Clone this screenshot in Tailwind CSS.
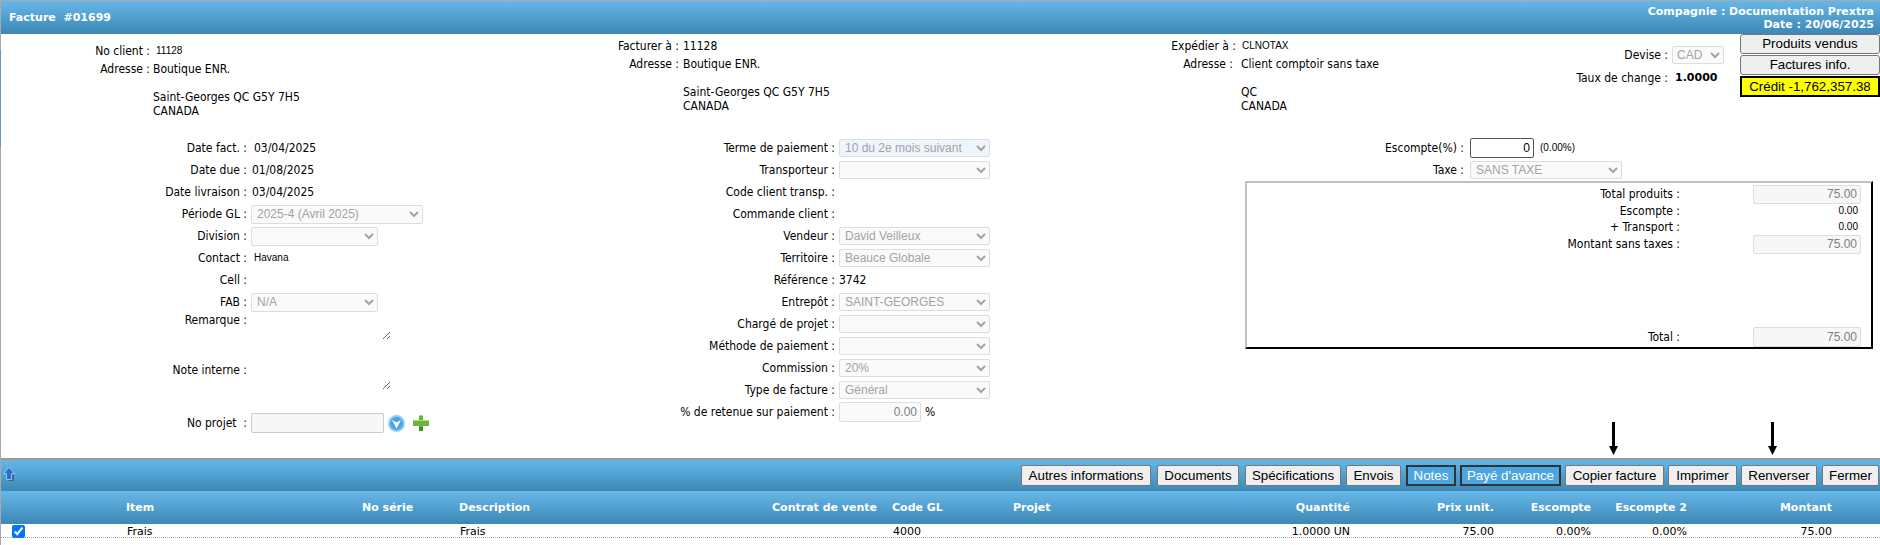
<!DOCTYPE html>
<html lang="fr">
<head>
<meta charset="utf-8">
<title>Facture</title>
<script src="https://cdn.jsdelivr.net/npm/@tailwindcss/browser@4"></script>
</head>
<body class="bg-white">
<div class="relative h-[545px] w-[1880px] overflow-hidden">
<div class="absolute left-0 top-[50px] z-10 h-[97px] w-px bg-[#5b9bbd]"></div>
<div class="relative h-[545px] w-[1880px] overflow-hidden border-l border-[#aaaaaa] text-[12px] leading-[14px] text-black font-['DejaVu_Sans_Condensed','Liberation_Sans',sans-serif]">

  <header class="h-[34px] border-t border-[#aaaaaa] bg-gradient-to-b from-[#66b7e8] to-[#3c88b6] flex items-center justify-between pl-[8px] pr-[6px] text-white font-bold text-[11px] font-['DejaVu_Sans',sans-serif]">
    <div class="whitespace-pre">Facture  #01699</div>
    <div class="text-right leading-[13px]">
      <div>Compagnie : Documentation Prextra</div>
      <div>Date : 20/06/2025</div>
    </div>
  </header>

  <section class="h-[103px] flex">
    <div class="w-[499px] pt-[8px]">
      <div class="flex h-[18px] items-center"><div class="w-[149px] text-right">No client :</div><div class="ml-[6px] text-[10px] font-['Liberation_Sans',sans-serif]">11128</div></div>
      <div class="flex h-[18px] items-center"><div class="w-[149px] text-right">Adresse :</div><div class="ml-[3px]">Boutique ENR.</div></div>
      <div class="ml-[152px] mt-[12px]"><div>Saint-Georges QC G5Y 7H5</div><div>CANADA</div></div>
    </div>
    <div class="w-[550px] pt-[3px]">
      <div class="flex h-[18px] items-center"><div class="w-[179px] text-right">Facturer à :</div><div class="ml-[4px]">11128</div></div>
      <div class="flex h-[18px] items-center"><div class="w-[179px] text-right">Adresse :</div><div class="ml-[4px]">Boutique ENR.</div></div>
      <div class="ml-[183px] mt-[12px]"><div>Saint-Georges QC G5Y 7H5</div><div>CANADA</div></div>
    </div>
    <div class="w-[450px] pt-[3px]">
      <div class="flex h-[18px] items-center"><div class="w-[186px] text-right">Expédier à :</div><div class="ml-[6px] text-[10px] font-['Liberation_Sans',sans-serif]">CLNOTAX</div></div>
      <div class="flex h-[18px] items-center"><div class="w-[183px] text-right">Adresse :</div><div class="ml-[8px]">Client comptoir sans taxe</div></div>
      <div class="ml-[191px] mt-[12px]"><div>QC</div><div>CANADA</div></div>
    </div>
    <div class="w-[240px] pt-[12px]">
      <div class="flex h-[18px] items-center">
        <div class="w-[168px] text-right">Devise :</div>
        <select disabled class="ml-[4px] h-[18px] w-[52px] rounded-[2px] border border-[#dddddd] bg-[#fafafa] text-[12px] text-[#a3a3a3] font-['Liberation_Sans',sans-serif]"><option>CAD</option></select>
      </div>
      <div class="mt-[5px] flex h-[18px] items-center">
        <div class="w-[168px] text-right">Taux de change :</div>
        <div class="ml-[7px] text-[11px] font-bold font-['DejaVu_Sans',sans-serif]">1.0000</div>
      </div>
    </div>
    <div class="w-[140px] flex flex-col gap-[1px] text-center text-[13.33px] font-['Liberation_Sans',sans-serif]">
      <button class="h-[20px] border border-[#777777] rounded-[3px] bg-[#efefef] leading-[18px]">Produits vendus</button>
      <button class="h-[20px] border border-[#777777] rounded-[3px] bg-[#efefef] leading-[18px]">Factures info.</button>
      <button class="h-[21px] border-2 border-black bg-[#ffff00] leading-[17px]">Crédit -1,762,357.38</button>
    </div>
  </section>

  <section class="h-[321px] flex">
    <div class="w-[588px]">
      <div class="flex h-[22px] items-center"><div class="w-[246px] text-right">Date fact. :</div><div class="ml-[7px]">03/04/2025</div></div>
      <div class="flex h-[22px] items-center"><div class="w-[246px] text-right">Date due :</div><div class="ml-[5px]">01/08/2025</div></div>
      <div class="flex h-[22px] items-center"><div class="w-[246px] text-right">Date livraison :</div><div class="ml-[5px]">03/04/2025</div></div>
      <div class="flex h-[22px] items-center"><div class="w-[246px] text-right">Période GL :</div><select disabled class="ml-[4px] h-[19px] w-[172px] rounded-[2px] border border-[#dddddd] bg-[#fafafa] pl-[1px] text-[12px] text-[#a3a3a3] font-['Liberation_Sans',sans-serif]"><option>2025-4 (Avril 2025)</option></select></div>
      <div class="flex h-[22px] items-center"><div class="w-[246px] text-right">Division :</div><select disabled class="ml-[4px] h-[19px] w-[127px] rounded-[2px] border border-[#dddddd] bg-[#fafafa] pl-[1px] text-[12px] text-[#a3a3a3] font-['Liberation_Sans',sans-serif]"><option></option></select></div>
      <div class="flex h-[22px] items-center"><div class="w-[246px] text-right">Contact :</div><div class="ml-[7px] text-[10px] font-['Liberation_Sans',sans-serif]">Havana</div></div>
      <div class="flex h-[22px] items-center"><div class="w-[246px] text-right">Cell :</div></div>
      <div class="flex h-[22px] items-center"><div class="w-[246px] text-right">FAB :</div><select disabled class="ml-[4px] h-[19px] w-[127px] rounded-[2px] border border-[#dddddd] bg-[#fafafa] pl-[1px] text-[12px] text-[#a3a3a3] font-['Liberation_Sans',sans-serif]"><option>N/A</option></select></div>
      <div class="flex h-[27px] items-start"><div class="w-[246px] text-right">Remarque :</div><textarea disabled class="ml-[4px] h-[27px] w-[140px] resize border-0 bg-white"></textarea></div>
      <div class="mt-[23px] flex h-[27px] items-start"><div class="w-[246px] text-right">Note interne :</div><textarea disabled class="ml-[4px] h-[27px] w-[140px] resize border-0 bg-white"></textarea></div>
      <div class="mt-[23px] flex h-[20px] items-center">
        <div class="w-[246px] text-right whitespace-pre">No projet  :</div>
        <input disabled class="ml-[4px] h-[20px] w-[133px] rounded-[2px] border border-[#cccccc] bg-[#f7f7f7]">
        <svg class="ml-[4px]" width="17" height="17" viewBox="0 0 17 17"><circle cx="8.5" cy="8.5" r="8.5" fill="#8fd0f5"/><circle cx="8.5" cy="8.5" r="6.5" fill="#4da3e6"/><path d="M4 5 L8.5 7.5 L13 5 L8.5 13.5 Z" fill="#ffffff"/></svg>
        <svg class="ml-[8px]" width="16" height="16" viewBox="0 0 16 16"><rect x="6" y="0" width="4" height="16" fill="#5fb82a"/><rect x="0" y="6" width="16" height="4" fill="#63bd2c"/><rect x="0" y="5" width="16" height="1" fill="#a9dc8e"/><rect x="6" y="0" width="4" height="1" fill="#a9dc8e"/><rect x="6" y="12" width="4" height="4" fill="#3e9017"/><rect x="0" y="10" width="16" height="1" fill="#8a9a80"/></svg>
      </div>
    </div>

    <div class="w-[656px]">
      <div class="flex h-[22px] items-center"><div class="w-[246px] text-right">Terme de paiement :</div><select disabled class="ml-[4px] h-[18px] w-[151px] rounded-[2px] border border-[#dddddd] bg-[#eef5fd] pl-[1px] text-[12px] text-[#a3a3a3] font-['Liberation_Sans',sans-serif]"><option>10 du 2e mois suivant</option></select></div>
      <div class="flex h-[22px] items-center"><div class="w-[246px] text-right">Transporteur :</div><select disabled class="ml-[4px] h-[18px] w-[151px] rounded-[2px] border border-[#dddddd] bg-[#fafafa] pl-[1px] text-[12px] text-[#a3a3a3] font-['Liberation_Sans',sans-serif]"><option></option></select></div>
      <div class="flex h-[22px] items-center"><div class="w-[246px] text-right">Code client transp. :</div></div>
      <div class="flex h-[22px] items-center"><div class="w-[246px] text-right">Commande client :</div></div>
      <div class="flex h-[22px] items-center"><div class="w-[246px] text-right">Vendeur :</div><select disabled class="ml-[4px] h-[18px] w-[151px] rounded-[2px] border border-[#dddddd] bg-[#fafafa] pl-[1px] text-[12px] text-[#a3a3a3] font-['Liberation_Sans',sans-serif]"><option>David Veilleux</option></select></div>
      <div class="flex h-[22px] items-center"><div class="w-[246px] text-right">Territoire :</div><select disabled class="ml-[4px] h-[18px] w-[151px] rounded-[2px] border border-[#dddddd] bg-[#fafafa] pl-[1px] text-[12px] text-[#a3a3a3] font-['Liberation_Sans',sans-serif]"><option>Beauce Globale</option></select></div>
      <div class="flex h-[22px] items-center"><div class="w-[246px] text-right">Référence :</div><div class="ml-[4px]">3742</div></div>
      <div class="flex h-[22px] items-center"><div class="w-[246px] text-right">Entrepôt :</div><select disabled class="ml-[4px] h-[18px] w-[151px] rounded-[2px] border border-[#dddddd] bg-[#fafafa] pl-[1px] text-[12px] text-[#a3a3a3] font-['Liberation_Sans',sans-serif]"><option>SAINT-GEORGES</option></select></div>
      <div class="flex h-[22px] items-center"><div class="w-[246px] text-right">Chargé de projet :</div><select disabled class="ml-[4px] h-[18px] w-[151px] rounded-[2px] border border-[#dddddd] bg-[#fafafa] pl-[1px] text-[12px] text-[#a3a3a3] font-['Liberation_Sans',sans-serif]"><option></option></select></div>
      <div class="flex h-[22px] items-center"><div class="w-[246px] text-right">Méthode de paiement :</div><select disabled class="ml-[4px] h-[18px] w-[151px] rounded-[2px] border border-[#dddddd] bg-[#fafafa] pl-[1px] text-[12px] text-[#a3a3a3] font-['Liberation_Sans',sans-serif]"><option></option></select></div>
      <div class="flex h-[22px] items-center"><div class="w-[246px] text-right">Commission :</div><select disabled class="ml-[4px] h-[18px] w-[151px] rounded-[2px] border border-[#dddddd] bg-[#fafafa] pl-[1px] text-[12px] text-[#a3a3a3] font-['Liberation_Sans',sans-serif]"><option>20%</option></select></div>
      <div class="flex h-[22px] items-center"><div class="w-[246px] text-right">Type de facture :</div><select disabled class="ml-[4px] h-[18px] w-[151px] rounded-[2px] border border-[#dddddd] bg-[#fafafa] pl-[1px] text-[12px] text-[#a3a3a3] font-['Liberation_Sans',sans-serif]"><option>Général</option></select></div>
      <div class="flex h-[22px] items-center"><div class="w-[246px] text-right">% de retenue sur paiement :</div><input disabled value="0.00" class="ml-[4px] h-[20px] w-[82px] rounded-[2px] border border-[#dddddd] bg-[#fafafa] pr-[3px] text-right text-[#808080] font-['Liberation_Sans',sans-serif]"><div class="ml-[4px]">%</div></div>
    </div>

    <div class="w-[635px]">
      <div class="flex h-[22px] items-center"><div class="w-[219px] text-right">Escompte(%) :</div><input value="0" class="ml-[6px] h-[20px] w-[64px] rounded-[2px] border border-[#555555] pr-[3px] text-right text-[12px] font-['Liberation_Sans',sans-serif]"><div class="ml-[6px] text-[10px] font-['Liberation_Sans',sans-serif]">(0.00%)</div></div>
      <div class="flex h-[22px] items-center"><div class="w-[219px] text-right">Taxe :</div><select disabled class="ml-[6px] h-[18px] w-[152px] rounded-[2px] border border-[#dddddd] bg-[#fafafa] pl-[1px] text-[12px] text-[#a3a3a3] font-['Liberation_Sans',sans-serif]"><option>SANS TAXE</option></select></div>
      <div class="h-[168px] w-[628px] border-2 border-t-[#c0c0c0] border-l-[#c0c0c0] border-r-black border-b-black flex flex-col pt-[1px]">
        <div class="flex h-[20px] items-center"><div class="w-[433px] text-right">Total produits :</div><input disabled value="75.00" class="ml-[73px] h-[19px] w-[108px] rounded-[2px] border border-[#dddddd] bg-[#f7f7f7] pr-[3px] text-right text-[#808080] font-['Liberation_Sans',sans-serif]"></div>
        <div class="flex h-[14px] items-center"><div class="w-[433px] text-right">Escompte :</div><div class="w-[178px] text-right text-[10px] font-['Liberation_Sans',sans-serif]">0.00</div></div>
        <div class="mt-[1px] flex h-[15px] items-center"><div class="w-[433px] text-right">+ Transport :</div><div class="w-[178px] text-right text-[10px] font-['Liberation_Sans',sans-serif]">0.00</div></div>
        <div class="flex h-[20px] items-center"><div class="w-[433px] text-right">Montant sans taxes :</div><input disabled value="75.00" class="ml-[73px] h-[19px] w-[108px] rounded-[2px] border border-[#dddddd] bg-[#f7f7f7] pr-[3px] text-right text-[#808080] font-['Liberation_Sans',sans-serif]"></div>
        <div class="mt-auto flex h-[20px] items-center"><div class="w-[433px] text-right">Total :</div><input disabled value="75.00" class="ml-[73px] h-[20px] w-[108px] rounded-[2px] border border-[#dddddd] bg-[#f7f7f7] pr-[3px] text-right text-[#808080] font-['Liberation_Sans',sans-serif]"></div>
      </div>
    </div>
  </section>

  <div class="h-[33px] border-t-2 border-[#999999] bg-gradient-to-b from-[#66b7e8] to-[#3c88b6] flex items-center justify-between pl-[2px] pr-[1px]">
    <svg class="mb-[3px]" width="13" height="14" viewBox="0 0 13 14"><path d="M8 7.5 L11 7.5 L11 14 L5 14 Z" fill="#3a4a5a" opacity="0.6"/><path d="M6 0.5 L11.5 6.5 L8.5 6.5 L8.5 12.5 L3.5 12.5 L3.5 6.5 L0.5 6.5 Z" fill="#2a6fd0" stroke="#a9d2f2" stroke-width="0.8"/></svg>
    <div class="flex gap-[4px] text-[13.33px] font-['Liberation_Sans',sans-serif]">
      <button class="h-[21px] w-[130px] border border-[#777777] rounded-[2px] bg-[#efefef]">Autres informations</button>
      <button class="ml-[2px] h-[21px] w-[82px] border border-[#777777] rounded-[2px] bg-[#efefef]">Documents</button>
      <button class="ml-[2px] h-[21px] w-[96px] border border-[#777777] rounded-[2px] bg-[#efefef]">Spécifications</button>
      <button class="ml-[1px] h-[21px] w-[55px] border border-[#777777] rounded-[2px] bg-[#efefef]">Envois</button>
      <button class="ml-[1px] h-[21px] w-[50px] border-2 border-[#333333] bg-[#4aa5e0] text-white">Notes</button>
      <button class="h-[21px] w-[101px] border-2 border-[#333333] bg-[#4aa5e0] text-white">Payé d'avance</button>
      <button class="h-[21px] w-[99px] border border-[#777777] rounded-[2px] bg-[#efefef]">Copier facture</button>
      <button class="h-[21px] w-[69px] border border-[#777777] rounded-[2px] bg-[#efefef]">Imprimer</button>
      <button class="h-[21px] w-[76px] border border-[#777777] rounded-[2px] bg-[#efefef]">Renverser</button>
      <button class="ml-[1px] h-[21px] w-[57px] border border-[#777777] rounded-[2px] bg-[#efefef]">Fermer</button>
    </div>
  </div>

  <div class="h-[33px] bg-gradient-to-b from-[#66b7e8] to-[#3c88b6] grid grid-cols-[125px_236px_97px_313px_120px_121px_187px_150px_144px_97px_96px_145px_48px] items-center text-white font-bold text-[11px] font-['DejaVu_Sans',sans-serif]">
    <div></div>
    <div>Item</div>
    <div>No série</div>
    <div>Description</div>
    <div>Contrat de vente</div>
    <div>Code GL</div>
    <div>Projet</div>
    <div class="text-right">Quantité</div>
    <div class="text-right">Prix unit.</div>
    <div class="text-right">Escompte</div>
    <div class="text-right">Escompte 2</div>
    <div class="text-right">Montant</div>
    <div></div>
  </div>

  <div class="h-[14px] border-b border-dotted border-[#aaaaaa] grid grid-cols-[125px_236px_97px_313px_120px_121px_187px_150px_144px_97px_96px_145px_48px] items-center text-[11px] leading-[13px] font-['DejaVu_Sans',sans-serif]">
    <div class="pl-[11px] flex items-center"><input type="checkbox" checked class="h-[13px] w-[13px] accent-[#0075ff]"></div>
    <div class="pl-[1px] pt-[1px]">Frais</div>
    <div></div>
    <div class="pl-[1px] pt-[1px]">Frais</div>
    <div></div>
    <div class="pl-[1px] pt-[1px]">4000</div>
    <div></div>
    <div class="pt-[1px] text-right">1.0000 UN</div>
    <div class="pt-[1px] text-right">75.00</div>
    <div class="pt-[1px] text-right">0.00%</div>
    <div class="pt-[1px] text-right">0.00%</div>
    <div class="pt-[1px] text-right">75.00</div>
    <div></div>
  </div>

  <svg class="absolute left-[1607px] top-[422px]" width="11" height="34" viewBox="0 0 11 34"><rect x="4" y="0" width="3" height="26" fill="#000"/><path d="M1 24 L10 24 L5.5 33 Z" fill="#000"/></svg>
  <svg class="absolute left-[1766px] top-[422px]" width="11" height="34" viewBox="0 0 11 34"><rect x="4" y="0" width="3" height="26" fill="#000"/><path d="M1 24 L10 24 L5.5 33 Z" fill="#000"/></svg>
</div>
</div>
</body>
</html>
